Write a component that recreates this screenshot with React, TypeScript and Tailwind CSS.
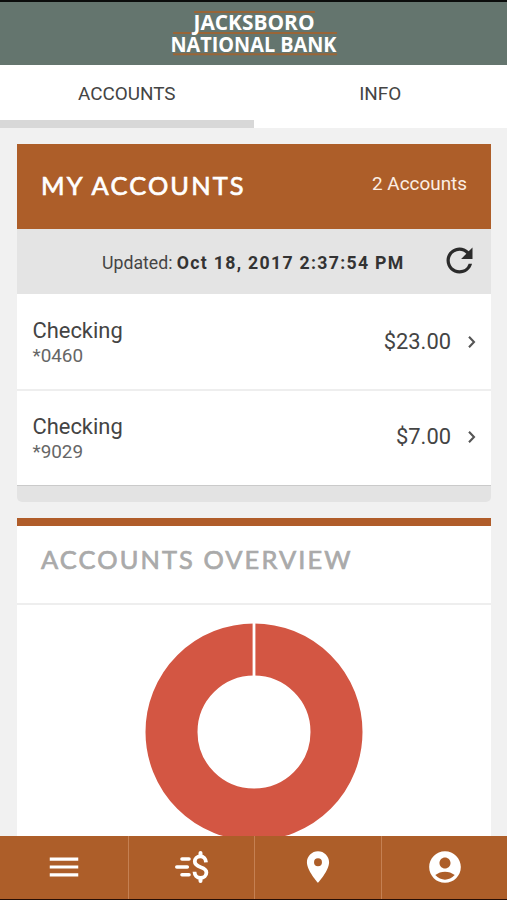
import React from "react";
import { MdAccountCircle, MdLocationOn, MdMenu, MdRefresh } from "react-icons/md";

const accounts = [
  { name: "Checking", mask: "*0460", balance: "$23.00" },
  { name: "Checking", mask: "*9029", balance: "$7.00" },
];

function Logo() {
  return (
    <svg width="170" height="56" viewBox="168 8 170 56" fill="none" className="block overflow-visible">
      <path d="M193 11.9h121M172 33h164M172 54.3h164" stroke="#9a6537" strokeWidth="2" />
      <g fill="#fff" fontFamily="'Open Sans', sans-serif" fontWeight="700">
        <text x="192.5" y="30" fontSize="21.5" textLength="121" lengthAdjust="spacingAndGlyphs">JACKSBORO</text>
        <text x="169.5" y="51.6" fontSize="20.5" textLength="166" lengthAdjust="spacingAndGlyphs">NATIONAL BANK</text>
      </g>
    </svg>
  );
}

function TransferIcon() {
  return (
    <svg width="36" height="36" viewBox="0 0 36 36" fill="none" stroke="#fff" strokeLinecap="round" className="block">
      <path d="M8 10h7M2.8 18h10.5M8 25.8h7" strokeWidth="3.6" />
      <path d="M32 13.4C31.8 9.8 29.6 7.4 26.4 7.4c-3.3 0-5.6 2.2-5.6 5.2 0 7 11.6 4.2 11.6 10.8 0 3.2-2.5 5.4-5.9 5.4-3.6 0-5.9-2.5-6-6.1" strokeWidth="3.8" strokeLinecap="butt" />
      <path d="M26.5 4v3M26.5 29v3" strokeWidth="4" />
    </svg>
  );
}

function AccountRow({ name, mask, balance }: { name: string; mask: string; balance: string }) {
  return (
    <div className="flex h-[97px] items-center justify-between pl-[15.5px] pr-[13px] last:h-[94px] last:pb-0.5">
      <div className="pt-[3px]">
        <div className="text-[21.9px] leading-[26px] text-[#444]">{name}</div>
        <div className="text-[18.9px] leading-6 text-[#666]">{mask}</div>
      </div>
      <div className="flex items-center">
        <span className="text-[21.9px] leading-6 text-[#444]">{balance}</span>
        <svg width="12" height="14" viewBox="0 0 12 14" fill="none" className="ml-[15px]">
          <path d="M3 1.8l5 5.2L3 12.2" stroke="#555" strokeWidth="2.1" />
        </svg>
      </div>
    </div>
  );
}

export default function App() {
  return (
    <div className="flex h-[900px] w-[507px] flex-col overflow-hidden border-b border-t-2 border-b-[#250d04] border-t-[#0b0d0c] bg-[#f1f1f1] font-['Roboto',sans-serif]">
      <header className="flex h-[63px] shrink-0 justify-center bg-[#64756e] pt-1.5">
        <Logo />
      </header>
      <nav className="grid h-[63px] shrink-0 grid-cols-2 bg-white text-center text-[18.9px] leading-[53px] text-[#444]">
        <div className="border-b-8 border-[#d8d8d8] pt-0.5">ACCOUNTS</div>
        <div className="pt-0.5">INFO</div>
      </nav>
      <main className="flex min-h-0 flex-1 flex-col gap-4 overflow-hidden pl-[17px] pr-4 pt-4">
        <section className="h-[358px] shrink-0 overflow-hidden rounded-b-[5px] bg-[#e3e3e3]">
          <div className="flex h-[85px] justify-between bg-[#ad5e29] pl-6 pr-6 text-white">
            <h1 className="pt-[25px] font-['Lato'] text-[25.4px] font-normal leading-8 tracking-[2.15px] [-webkit-text-stroke:0.7px_#fff]">MY ACCOUNTS</h1>
            <span className="pt-7 text-[18.9px] leading-6 text-[#fbeee4]">2 Accounts</span>
          </div>
          <div className="flex h-[65px] items-center justify-between bg-[#e4e4e4] pl-[85px] pr-3">
            <p className="whitespace-nowrap pt-[3px] text-[17.7px] text-[#444]">
              Updated: <b className="tracking-[1.3px] text-[#333]">Oct 18, 2017 2:37:54 PM</b>
            </p>
            <MdRefresh size={39} color="#2b2b2b" className="mb-[3px]" />
          </div>
          <div className="h-[192px] divide-y-2 divide-[#eee] border-b border-[#cacaca] bg-white">
            {accounts.map((a) => (
              <AccountRow key={a.mask} {...a} />
            ))}
          </div>
        </section>
        <section className="min-h-0 flex-1 overflow-hidden border-t-8 border-[#b05d2a] bg-white">
          <h2 className="h-[79px] border-b-2 border-[#eee] pl-6 pt-[17px] font-['Lato'] text-[25.4px] font-normal leading-8 tracking-[2.1px] text-[#aaa] [-webkit-text-stroke:0.7px_#aaa]">
            ACCOUNTS OVERVIEW
          </h2>
          <svg width="218" height="218" viewBox="0 0 218 218" className="mx-auto mt-[18px] block">
            <circle cx="109" cy="109" r="82.5" fill="none" stroke="#d35643" strokeWidth="52" />
            <path d="M109 0v54" stroke="#fff" strokeWidth="2.8" />
          </svg>
        </section>
      </main>
      <footer className="grid h-[63px] shrink-0 grid-cols-[129px_126px_127px_125px] divide-x divide-[#c58052] bg-[#ad5e29] text-white">
        <div className="flex items-center justify-center pb-px"><MdMenu size={38} /></div>
        <div className="flex items-center justify-center pb-px"><TransferIcon /></div>
        <div className="flex items-center justify-center pb-0.5"><MdLocationOn size={38} /></div>
        <div className="flex items-center justify-center pb-px"><MdAccountCircle size={38} /></div>
      </footer>
    </div>
  );
}
